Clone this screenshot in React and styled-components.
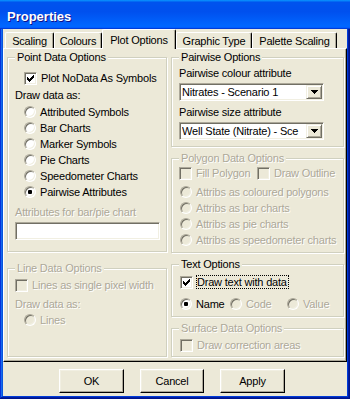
import React from 'react';
import styled, { createGlobalStyle, css } from 'styled-components';

const GlobalStyle = createGlobalStyle`
  html, body {
    margin: 0;
    padding: 0;
    background: #fff;
  }
  body {
    font-family: "Liberation Sans", Arial, sans-serif;
    font-size: 11px;
    letter-spacing: -0.2px;
    color: #000;
  }
`;

const FACE = '#ECE9D8';
const disabledText = css`
  color: #aca899;
  text-shadow: 1px 1px 0 #fff;
`;

const Window = styled.div`
  width: 350px;
  height: 399px;
  box-sizing: border-box;
  display: flex;
  flex-direction: column;
  background: #0842d6;
  box-shadow: inset -1px -1px #00138c, inset 1px 0 #0831d9,
    inset -2px -2px #001ea0, inset 2px 0 #166aee, inset -3px -3px #003bda,
    inset 3px 0 #0855dd;
`;

const TitleBar = styled.div`
  flex: none;
  height: 29px;
  box-sizing: border-box;
  padding: 4px 7px 0;
  display: flex;
  align-items: center;
  background: linear-gradient(
    180deg,
    #0997ff,
    #0053ee 8%,
    #0050ee 40%,
    #0066ff 88%,
    #0066ff 93%,
    #005bff 95%,
    #003dd7 96%,
    #003dd7
  );
  color: #fff;
  font: bold 13px "Liberation Sans", Arial, sans-serif;
  letter-spacing: 0;
  text-shadow: 1px 1px #0f1089;
`;

const Client = styled.div`
  flex: 1;
  margin: 0 3px 3px;
  background: ${FACE};
  display: flex;
  flex-direction: column;
`;

const TabStrip = styled.div`
  flex: none;
  height: 19px;
  padding-left: 2px;
  display: flex;
  align-items: flex-end;
`;

const Tab = styled.div`
  width: ${(p) => p.$w}px;
  height: ${(p) => (p.$active ? 20 : 16)}px;
  box-sizing: border-box;
  padding-top: ${(p) => (p.$active ? 4 : 2)}px;
  line-height: 13px;
  text-align: center;
  white-space: nowrap;
  background: ${FACE};
  border-top: 1px solid #fff;
  border-left: 1px solid #fff;
  border-right: 1px solid #000;
  border-top-left-radius: 2px;
  border-top-right-radius: 2px;
  box-shadow: inset -1px 0 #aca899;
  ${(p) =>
    p.$active &&
    css`
      position: relative;
      z-index: 1;
      margin-bottom: -1px;
    `}
`;

const Panel = styled.div`
  flex: none;
  height: 314px;
  box-sizing: border-box;
  border-top: 1px solid #fff;
  border-left: 1px solid #fff;
  border-right: 1px solid #000;
  border-bottom: 1px solid #000;
  box-shadow: inset -1px -1px #aca899;
  padding: 2px 2px 4px 3px;
  display: flex;
  gap: 4px;
`;

const Column = styled.div`
  width: ${(p) => p.$w}px;
  display: flex;
  flex-direction: column;
  gap: ${(p) => p.$gap}px;
`;

const Group = styled.fieldset`
  margin: 0;
  min-width: 0;
  height: ${(p) => p.$h}px;
  box-sizing: border-box;
  padding: ${(p) => p.$top || 0}px 7px 0;
  border: 1px solid #d0d0bf;
  box-shadow: 1px 1px 0 #fff, inset 1px 1px 0 #fff;
  display: flex;
  flex-direction: column;
`;

const Legend = styled.legend`
  padding: 0 2px;
  line-height: 13px;
  font-size: 11px;
  background: ${FACE};
  ${(p) => p.$disabled && disabledText}
`;

const Row = styled.div`
  height: 16px;
  flex: none;
  display: flex;
  align-items: center;
  padding-left: ${(p) => p.$indent || 0}px;
  margin-top: ${(p) => p.$mt || 0}px;
`;

const Text = styled.span`
  line-height: 13px;
  white-space: nowrap;
  ${(p) => p.$disabled && disabledText}
`;

const Item = styled.label`
  display: flex;
  align-items: center;
  gap: 4px;
  width: ${(p) => (p.$w ? `${p.$w}px` : 'auto')};
  flex: none;
`;

const Box = styled.span`
  position: relative;
  width: 13px;
  height: 13px;
  box-sizing: border-box;
  flex: none;
  border: 1px solid;
  border-color: #aca899 #fff #fff #aca899;
  box-shadow: inset 1px 1px #716f64, inset -1px -1px #f1efe2;
  background: ${(p) => (p.$disabled ? FACE : '#fff')};
`;

const CheckMark = styled.svg`
  position: absolute;
  left: 2px;
  top: 2px;
`;

const Circle = styled.span`
  position: relative;
  width: 12px;
  height: 12px;
  box-sizing: border-box;
  flex: none;
  border-radius: 50%;
  border: 1px solid;
  border-color: #aca899 #fff #fff #aca899;
  box-shadow: inset 1px 1px #716f64, inset -1px -1px #f1efe2;
  background: ${(p) => (p.$disabled ? FACE : '#fff')};
  display: flex;
  align-items: center;
  justify-content: center;
`;

const Dot = styled.span`
  width: 4px;
  height: 4px;
  border-radius: 1px;
  background: #000;
`;

const Focus = styled.span`
  line-height: 12px;
  padding: 0 1px 0 0;
  margin-left: -1px;
  border: 1px dotted #000;
  white-space: nowrap;
`;

const Sunken = styled.div`
  box-sizing: border-box;
  width: ${(p) => p.$w}px;
  height: ${(p) => p.$h}px;
  margin-top: ${(p) => p.$mt || 0}px;
  flex: none;
  border: 1px solid;
  border-color: #aca899 #fff #fff #aca899;
  box-shadow: inset 1px 1px #716f64, inset -1px -1px #f1efe2;
  background: #fff;
  display: flex;
  align-items: center;
  padding: 1px 1px 1px 2px;
  overflow: hidden;
`;

const ComboText = styled.span`
  flex: 1;
  overflow: hidden;
  white-space: nowrap;
  line-height: 13px;
`;

const DropButton = styled.span`
  width: 16px;
  height: 100%;
  flex: none;
  box-sizing: border-box;
  border: 1px solid;
  border-color: #f1efe2 #716f64 #716f64 #f1efe2;
  box-shadow: inset 1px 1px #fff, inset -1px -1px #aca899;
  background: ${FACE};
  display: flex;
  align-items: center;
  justify-content: center;
`;

const Footer = styled.div`
  flex: 1;
  display: flex;
  align-items: flex-start;
  padding: 7px 0 0 56px;
  gap: 16px;
`;

const Button = styled.button`
  width: ${(p) => p.$w}px;
  height: 24px;
  box-sizing: border-box;
  padding: 0;
  font: 11px "Liberation Sans", Arial, sans-serif;
  letter-spacing: -0.2px;
  color: #000;
  background: ${FACE};
  border: 1px solid;
  border-color: #fff #000 #000 #fff;
  box-shadow: inset -1px -1px #aca899, inset 1px 1px #f1efe2;
`;

const Check = ({ checked, disabled, children, w }) => (
  <Item $w={w}>
    <Box $disabled={disabled}>
      {checked && (
        <CheckMark width="7" height="7" viewBox="0 0 7 7" shapeRendering="crispEdges">
          <path
            d="M0 2h1v3H0zM1 3h1v3H1zM2 4h1v3H2zM3 3h1v3H3zM4 2h1v3H4zM5 1h1v3H5zM6 0h1v3H6z"
            fill="#000"
          />
        </CheckMark>
      )}
    </Box>
    {children}
  </Item>
);

const Radio = ({ checked, disabled, children, w }) => (
  <Item $w={w}>
    <Circle $disabled={disabled}>{checked && <Dot />}</Circle>
    <Text $disabled={disabled}>{children}</Text>
  </Item>
);

const Combo = ({ value, mt }) => (
  <Sunken $w={145} $h={18} $mt={mt}>
    <ComboText>{value}</ComboText>
    <DropButton>
      <svg width="7" height="4" viewBox="0 0 7 4" shapeRendering="crispEdges">
        <path d="M0 0h7v1H0zM1 1h5v1H1zM2 2h3v1H2zM3 3h1v1H3z" fill="#000" />
      </svg>
    </DropButton>
  </Sunken>
);

const tabs = [
  { label: 'Scaling', w: 49 },
  { label: 'Colours', w: 48 },
  { label: 'Plot Options', w: 74, active: true },
  { label: 'Graphic Type', w: 76 },
  { label: 'Palette Scaling', w: 85 },
];

const pointModes = [
  'Attributed Symbols',
  'Bar Charts',
  'Marker Symbols',
  'Pie Charts',
  'Speedometer Charts',
  'Pairwise Attributes',
];

const polygonModes = [
  'Attribs as coloured polygons',
  'Attribs as bar charts',
  'Attribs as pie charts',
  'Attribs as speedometer charts',
];

const App = () => (
  <>
    <GlobalStyle />
    <Window>
      <TitleBar>Properties</TitleBar>
      <Client>
        <TabStrip>
          {tabs.map((t) => (
            <Tab key={t.label} $w={t.w} $active={t.active}>
              {t.label}
            </Tab>
          ))}
        </TabStrip>
        <Panel>
          <Column $w={160} $gap={10}>
            <Group $h={201} $top={6}>
              <Legend>Point Data Options</Legend>
              <Row $indent={9}>
                <Check checked>
                  <Text>Plot NoData As Symbols</Text>
                </Check>
              </Row>
              <Row $mt={1}>
                <Text>Draw data as:</Text>
              </Row>
              {pointModes.map((m, i) => (
                <Row key={m} $indent={9} $mt={i === 0 ? 1 : 0}>
                  <Radio checked={m === 'Pairwise Attributes'}>{m}</Radio>
                </Row>
              ))}
              <Row $mt={4}>
                <Text $disabled>Attributes for bar/pie chart</Text>
              </Row>
              <Sunken $w={145} $h={18} $mt={2} />
            </Group>
            <Group $h={95} $top={2}>
              <Legend $disabled>Line Data Options</Legend>
              <Row>
                <Check disabled>
                  <Text $disabled>Lines as single pixel width</Text>
                </Check>
              </Row>
              <Row $mt={3}>
                <Text $disabled>Draw data as:</Text>
              </Row>
              <Row $indent={9}>
                <Radio disabled>Lines</Radio>
              </Row>
            </Group>
          </Column>
          <Column $w={173} $gap={5}>
            <Group $h={96} $top={1}>
              <Legend>Pairwise Options</Legend>
              <Row>
                <Text>Pairwise colour attribute</Text>
              </Row>
              <Combo value="Nitrates - Scenario 1" mt={2} />
              <Row $mt={3}>
                <Text>Pairwise size attribute</Text>
              </Row>
              <Combo value="Well State (Nitrate) - Sce" mt={2} />
            </Group>
            <Group $h={101}>
              <Legend $disabled>Polygon Data Options</Legend>
              <Row>
                <Check disabled w={78}>
                  <Text $disabled>Fill Polygon</Text>
                </Check>
                <Check disabled>
                  <Text $disabled>Draw Outline</Text>
                </Check>
              </Row>
              {polygonModes.map((m, i) => (
                <Row key={m} $indent={1} $mt={i === 0 ? 3 : 0}>
                  <Radio disabled>{m}</Radio>
                </Row>
              ))}
            </Group>
            <Group $h={59} $top={3}>
              <Legend>Text Options</Legend>
              <Row $indent={1}>
                <Check checked>
                  <Focus>Draw text with data</Focus>
                </Check>
              </Row>
              <Row $indent={1} $mt={6}>
                <Radio checked w={50}>
                  Name
                </Radio>
                <Radio disabled w={57}>
                  Code
                </Radio>
                <Radio disabled>Value</Radio>
              </Row>
            </Group>
            <Group $h={35} $top={2}>
              <Legend $disabled>Surface Data Options</Legend>
              <Row $indent={1}>
                <Check disabled>
                  <Text $disabled>Draw correction areas</Text>
                </Check>
              </Row>
            </Group>
          </Column>
        </Panel>
        <Footer>
          <Button $w={65}>OK</Button>
          <Button $w={64}>Cancel</Button>
          <Button $w={65}>Apply</Button>
        </Footer>
      </Client>
    </Window>
  </>
);

export default App;
